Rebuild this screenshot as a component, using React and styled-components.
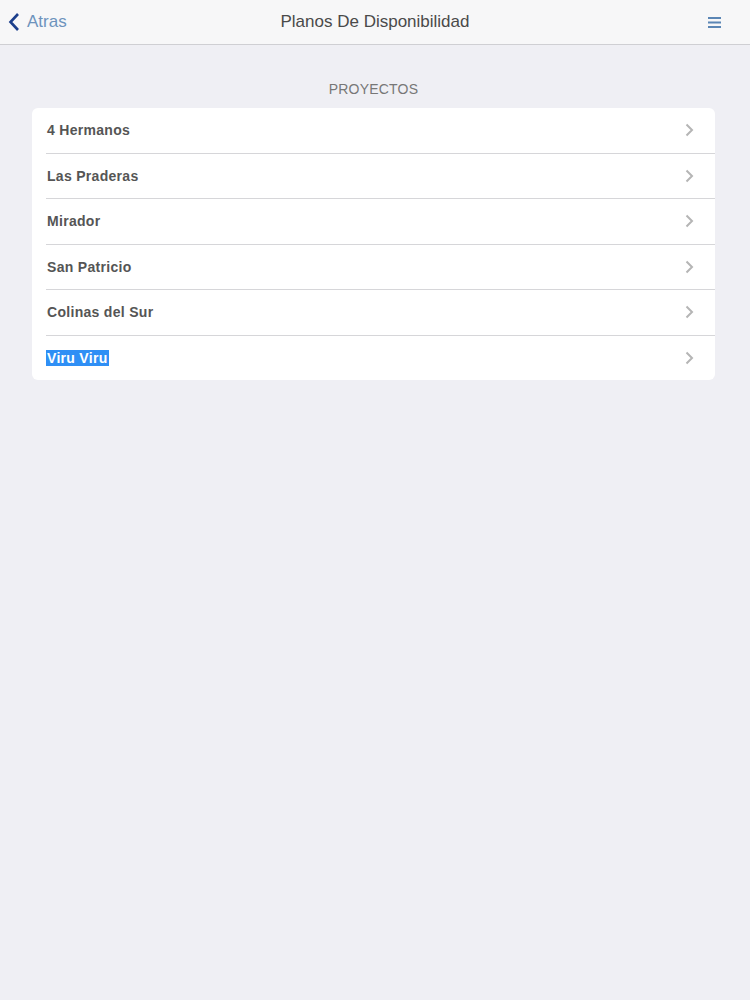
import styled, { createGlobalStyle } from "styled-components";

const GlobalStyle = createGlobalStyle`
  html, body {
    margin: 0;
    padding: 0;
    background: #efeff4;
    font-family: "Liberation Sans", Arial, sans-serif;
  }
`;

const projects = [
  "4 Hermanos",
  "Las Praderas",
  "Mirador",
  "San Patricio",
  "Colinas del Sur",
  "Viru Viru",
];

const Page = styled.div`
  min-height: 1000px;
  background: #efeff4;
`;

const Header = styled.header`
  height: 44px;
  display: grid;
  grid-template-columns: 1fr auto 1fr;
  align-items: center;
  background: #f7f7f8;
  border-bottom: 1px solid #cfcfd3;
  padding: 0 8px;
`;

const Back = styled.a`
  display: flex;
  align-items: center;
  gap: 7px;
  color: #6d93bd;
  font-size: 17px;
  text-decoration: none;
`;

const Title = styled.h1`
  margin: 0;
  font-size: 17px;
  font-weight: normal;
  color: #4a4a4a;
`;

const Menu = styled.div`
  justify-self: end;
  padding-right: 21px;
  display: flex;
`;

const Section = styled.section`
  padding: 36px 35px 0 32px;
`;

const SectionTitle = styled.div`
  text-align: center;
  font-size: 14px;
  color: #777;
  letter-spacing: 0.2px;
  margin-bottom: 11px;
`;

const Card = styled.ul`
  list-style: none;
  margin: 0;
  padding: 0;
  background: #fff;
  border-radius: 6px;
  overflow: hidden;
`;

const Row = styled.li`
  margin-left: 14px;
  height: 44.5px;
  display: flex;
  align-items: center;
  justify-content: space-between;
  padding-right: 21px;
  border-bottom: ${(p) => (p.$last ? "none" : "1px solid #d6d6d9")};
  font-size: 14px;
  font-weight: bold;
  color: #555;
  letter-spacing: 0.3px;
`;

const Label = styled.span`
  padding: 0 1px;
  background: ${(p) => (p.$selected ? "#2f8ff5" : "transparent")};
  color: ${(p) => (p.$selected ? "#fff" : "inherit")};
`;

const Chevron = ({ color = "#b5b5b5" }) => (
  <svg width="9" height="14" viewBox="0 0 9 14">
    <path d="M1.5 1.5 L7 7 L1.5 12.5" fill="none" stroke={color} strokeWidth="2" />
  </svg>
);

export default function App() {
  return (
    <Page>
      <GlobalStyle />
      <Header>
        <Back href="#">
          <svg width="12" height="20" viewBox="0 0 12 20">
            <path d="M10 2 L2.5 10 L10 18" fill="none" stroke="#1c3f8c" strokeWidth="2.6" />
          </svg>
          Atras
        </Back>
        <Title>Planos De Disponibilidad</Title>
        <Menu>
          <svg width="13" height="11" viewBox="0 0 13 11">
            <rect x="0" y="0" width="13" height="2" fill="#5b86b5" />
            <rect x="0" y="4.5" width="13" height="2" fill="#5b86b5" />
            <rect x="0" y="9" width="13" height="2" fill="#5b86b5" />
          </svg>
        </Menu>
      </Header>
      <Section>
        <SectionTitle>PROYECTOS</SectionTitle>
        <Card>
          {projects.map((name, i) => (
            <Row key={name} $last={i === projects.length - 1}>
              <Label $selected={name === "Viru Viru"}>{name}</Label>
              <Chevron />
            </Row>
          ))}
        </Card>
      </Section>
    </Page>
  );
}
